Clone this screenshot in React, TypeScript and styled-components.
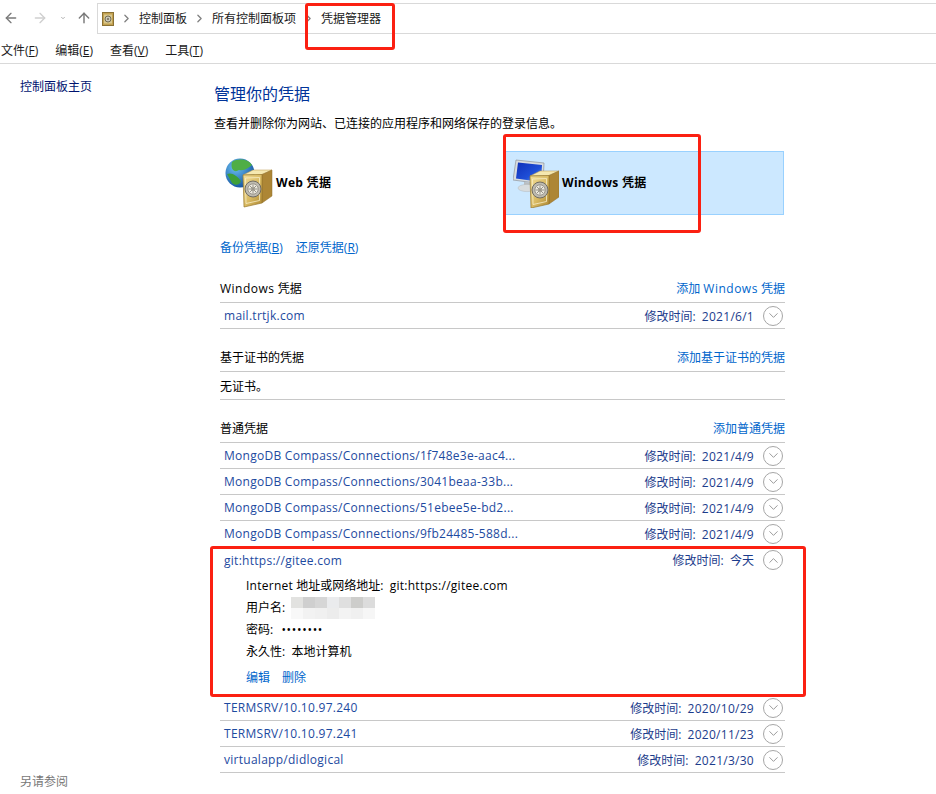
import { ArrowLeft, ArrowRight, ArrowUp, ChevronDown, ChevronRight, ChevronUp } from "lucide-react";
import styled, { createGlobalStyle } from "styled-components";

const GlobalStyle = createGlobalStyle`
    html, body {
        margin: 0;
        padding: 0;
        background: #fff;
    }
    * {
        box-sizing: border-box;
    }
`

const Main = styled.main`
    position: relative;
    width: 936px;
    height: 794px;
    overflow: hidden;
    background: #fff;
    color: #000;
    font-family: "Open Sans", "Noto Sans CJK SC", sans-serif;
    font-size: 12px;
`

const Latin = styled.span`
    letter-spacing: 0.27px;
`

const LatinWide = styled.span`
    letter-spacing: 0.5px;
`

const NavBar = styled.div`
    display: flex;
    align-items: flex-start;
    height: 34px;
    padding-top: 3px;
`

const NavButtons = styled.div`
    display: flex;
    align-items: center;
    width: 97px;
    height: 30px;
    padding-left: 2px;
`

const NavButton = styled.span<{ $width: number; $color: string }>`
    display: flex;
    flex-shrink: 0;
    justify-content: center;
    width: ${props => props.$width}px;
    color: ${props => props.$color};
`

const AddressBar = styled.div`
    display: flex;
    align-items: center;
    flex: 1;
    height: 31px;
    padding-left: 4px;
    border: 1px solid #d9d9d9;
    border-right: none;
`

const Crumb = styled.span`
    line-height: 28px;
    color: #1a1a1a;
`

const CrumbArrow = styled.span`
    display: flex;
    justify-content: center;
    width: 25px;
    color: #808080;
`

const MenuBar = styled.div`
    display: flex;
    gap: 17px;
    align-items: center;
    height: 30px;
    padding-left: 1px;
    border-bottom: 1px solid #d9d9d9;
    padding-top: 3px;
`

const MenuItem = styled.span`
    color: #1a1a1a;
    u {
        text-underline-offset: 1px;
    }
`

const Page = styled.div`
    display: flex;
    height: 730px;
`

const SideBar = styled.div`
    display: flex;
    flex-direction: column;
    justify-content: space-between;
    width: 214px;
    padding: 13px 0 2px 20px;
`

const SideLink = styled.span`
    line-height: 20px;
    color: #00136f;
`

const SideFooter = styled.span`
    line-height: 20px;
    color: #777;
`

const Content = styled.div`
    width: 571px;
    padding-top: 19px;
`

const Heading = styled.h1`
    margin: 0;
    font-size: 16px;
    font-weight: 400;
    line-height: 22px;
    color: #003399;
`

const Description = styled.p`
    margin: 9px 0 0;
    line-height: 20px;
`

const Tiles = styled.div`
    display: flex;
    height: 64px;
    margin-top: 17px;
`

const Tile = styled.div<{ $active?: boolean; $width: number }>`
    display: flex;
    align-items: center;
    gap: 3px;
    width: ${props => props.$width}px;
    padding-left: ${props => props.$active ? 9 : 10}px;
    background: ${props => props.$active ? "#cce8ff" : "transparent"};
    border: 1px solid ${props => props.$active ? "#99d1ff" : "transparent"};
`

const TileLabel = styled.span`
    margin-bottom: 2px;
    font-weight: 700;
    letter-spacing: 0.3px;
`

const BackupLinks = styled.div`
    display: flex;
    gap: 13px;
    margin-top: 23px;
    padding-left: 6px;
    line-height: 20px;
    color: #0066cc;
    u {
        text-underline-offset: 1px;
    }
`

const Section = styled.section<{ $gap: number }>`
    margin-top: ${props => props.$gap}px;
    padding-left: 6px;
`

const SectionHead = styled.div`
    display: flex;
    justify-content: space-between;
    height: 24px;
    line-height: 20px;
    border-bottom: 1px solid #c8c8c8;
`

const AddLink = styled.span`
    color: #0066cc;
`

const Row = styled.div`
    display: flex;
    align-items: center;
    height: 26px;
    padding: 0 2px 0 4px;
    border-bottom: 1px solid #c8c8c8;
`

const EmptyRow = styled(Row)`
    height: 28px;
    padding-left: 0;
`

const ExpandedRow = styled.div`
    height: 148px;
    border-bottom: 1px solid #c8c8c8;
`

const RowHead = styled(Row)`
    border-bottom: none;
`

const RowName = styled.span`
    flex: 1;
    letter-spacing: 0.27px;
    color: #1d4aa0;
`

const RowDate = styled.span`
    margin-right: 9px;
    color: #1c3c8c;
`

const Toggle = styled.span`
    display: flex;
    align-items: center;
    justify-content: center;
    width: 20px;
    height: 20px;
    color: #8c8c8c;
    border: 1px solid #a6a6a6;
    border-radius: 50%;
`

const Details = styled.div`
    padding: 2px 0 0 26px;
`

const DetailLine = styled.div`
    height: 22px;
    line-height: 22px;
`

const UserLine = styled(DetailLine)`
    display: flex;
    align-items: center;
`

const Mosaic = styled.div`
    display: grid;
    grid-template-columns: repeat(7, 12px);
    grid-auto-rows: 11px;
    margin-left: 6px;
`

const MosaicCell = styled.span<{ $color: string }>`
    background: ${props => props.$color};
`

const PasswordDots = styled.span`
    margin-left: 2px;
    letter-spacing: 0.7px;
`

const DetailActions = styled.div`
    display: flex;
    gap: 12px;
    margin-top: 4px;
    line-height: 22px;
    color: #0066cc;
`

const Annotation = styled.div<{ $x: number; $y: number; $w: number; $h: number }>`
    position: absolute;
    left: ${props => props.$x}px;
    top: ${props => props.$y}px;
    width: ${props => props.$w}px;
    height: ${props => props.$h}px;
    border: 3px solid #fb2012;
    border-radius: 3px;
`

const mosaicColors = [
    "#e2e2e0", "#cfcfcf", "#d6d6d6", "#eaebed", "#dfdfdf", "#cdcdcb", "#dcdcdc",
    "#f8f8f8", "#f2f2f2", "#f0f0f0", "#ececec", "#f3f3f3", "#f0f0f0", "#f6f6f6",
];

const mongoRows = [
    ["MongoDB Compass/Connections/1f748e3e-aac4...", "2021/4/9"],
    ["MongoDB Compass/Connections/3041beaa-33b...", "2021/4/9"],
    ["MongoDB Compass/Connections/51ebee5e-bd2...", "2021/4/9"],
    ["MongoDB Compass/Connections/9fb24485-588d...", "2021/4/9"],
];

const otherRows = [
    ["TERMSRV/10.10.97.240", "2020/10/29"],
    ["TERMSRV/10.10.97.241", "2020/11/23"],
    ["virtualapp/didlogical", "2021/3/30"],
];

// gold safe, the same drawing on both tiles
function VaultShape(props: { id: string }) {
    return (
        <g>
            <defs>
                <linearGradient id={props.id} x1="0" y1="0" x2="1" y2="1">
                    <stop offset="0" stopColor="#f1dd98" />
                    <stop offset="0.55" stopColor="#d9ba62" />
                    <stop offset="1" stopColor="#ae8833" />
                </linearGradient>
            </defs>
            <path d="M18 18 L28 13 L47 13 L37 17.5 Z" fill="#f5e8b0" stroke="#b8964a" strokeWidth="0.5" />
            <path d="M37 17.5 L47 13 L47 39 L37 46 Z" fill="#ad8635" stroke="#8f6f2c" strokeWidth="0.5" />
            <path d="M18 18 L37 17.5 L37 46 L19 50 Z" fill={`url(#${props.id})`} stroke="#987729" strokeWidth="0.7" />
            <path d="M20.5 21 L34.5 20.5 L34.5 43.5 L21 46.5 Z" fill="none" stroke="#f8eec6" strokeWidth="0.8" />
            <circle cx="28" cy="32" r="8" fill="#bdbab0" stroke="#6f6b62" strokeWidth="1" />
            <circle cx="28" cy="32" r="5.2" fill="#ece9df" stroke="#8b877d" strokeWidth="0.8" />
            <path d="M28 27.5 V36.5 M23.5 32 H32.5 M25 29 L31 35 M31 29 L25 35" stroke="#807c72" strokeWidth="0.8" />
            <circle cx="28" cy="32" r="1.8" fill="#9a968b" />
        </g>
    );
}

function WebVaultIcon() {
    return (
        <svg width="48" height="52" viewBox="0 0 48 52">
            <defs>
                <radialGradient id="globeFill" cx="0.35" cy="0.3" r="0.8">
                    <stop offset="0" stopColor="#6cc0f2" />
                    <stop offset="1" stopColor="#0b4a9a" />
                </radialGradient>
            </defs>
            <circle cx="15" cy="16" r="14.5" fill="url(#globeFill)" />
            <path d="M7 5 C13 1 23 2 27 8 C23 11 20 14 14 13 C10 16 5 13 7 5 Z" fill="#4fae45" />
            <path d="M2 17 C7 15 12 19 16 24 C15 28 10 29 7 26 Z" fill="#3f9f38" />
            <VaultShape id="vaultWeb" />
        </svg>
    );
}

function WindowsVaultIcon() {
    return (
        <svg width="46" height="50" viewBox="0 0 46 50">
            <defs>
                <linearGradient id="screenFill" x1="0" y1="0" x2="1" y2="1">
                    <stop offset="0" stopColor="#0f2fb8" />
                    <stop offset="0.6" stopColor="#1f4fd8" />
                    <stop offset="1" stopColor="#7fb0f0" />
                </linearGradient>
            </defs>
            <path d="M3 2 L31 5 L30 26 L0 22 Z" fill="#d8dcdf" stroke="#8f9499" strokeWidth="0.7" />
            <path d="M5 4.5 L29 7 L28 24 L3 20.5 Z" fill="url(#screenFill)" />
            <path d="M11 24 L20 25 L20 29 L11 28 Z" fill="#b9bdc0" />
            <ellipse cx="14" cy="30" rx="9" ry="3.6" fill="#d8dcde" stroke="#b4b8ba" strokeWidth="0.5" />
            <g transform="translate(-1 0)">
                <VaultShape id="vaultWin" />
            </g>
        </svg>
    );
}

function SmallVaultIcon() {
    return (
        <svg width="12" height="14" viewBox="0 0 12 14">
            <rect x="0.5" y="0.5" width="11" height="13" fill="#c2a04f" stroke="#8a7134" />
            <rect x="2" y="2.5" width="8" height="9" fill="#d8c88e" />
            <circle cx="6" cy="7" r="3" fill="#c9c6b8" stroke="#716a52" />
            <circle cx="6" cy="7" r="1" fill="#716a52" />
        </svg>
    );
}

function CrumbSeparator() {
    return <CrumbArrow><ChevronRight size={13} strokeWidth={2.4} /></CrumbArrow>;
}

function DataRow(props: { name: string; date: string }) {
    return (
        <Row>
            <RowName>{props.name}</RowName>
            <RowDate>修改时间:&nbsp; <Latin>{props.date}</Latin></RowDate>
            <Toggle><ChevronDown size={15} strokeWidth={1.4} /></Toggle>
        </Row>
    );
}

export default function App() {
    return (
        <Main>
            <GlobalStyle />
            <NavBar>
                <NavButtons>
                    <NavButton $width={18} $color="#7a7a7a"><ArrowLeft size={16} strokeWidth={2} /></NavButton>
                    <NavButton $width={40} $color="#cfcfcf"><ArrowRight size={16} strokeWidth={2} /></NavButton>
                    <NavButton $width={6} $color="#8a8a8a"><ChevronDown size={12} strokeWidth={2.6} /></NavButton>
                    <NavButton $width={36} $color="#7a7a7a"><ArrowUp size={16} strokeWidth={2.2} /></NavButton>
                </NavButtons>
                <AddressBar>
                    <SmallVaultIcon />
                    <CrumbSeparator />
                    <Crumb>控制面板</Crumb>
                    <CrumbSeparator />
                    <Crumb>所有控制面板项</Crumb>
                    <CrumbSeparator />
                    <Crumb>凭据管理器</Crumb>
                </AddressBar>
            </NavBar>
            <MenuBar>
                <MenuItem>文件(<u>F</u>)</MenuItem>
                <MenuItem>编辑(<u>E</u>)</MenuItem>
                <MenuItem>查看(<u>V</u>)</MenuItem>
                <MenuItem>工具(<u>T</u>)</MenuItem>
            </MenuBar>
            <Page>
                <SideBar>
                    <SideLink>控制面板主页</SideLink>
                    <SideFooter>另请参阅</SideFooter>
                </SideBar>
                <Content>
                    <Heading>管理你的凭据</Heading>
                    <Description>查看并删除你为网站、已连接的应用程序和网络保存的登录信息。</Description>
                    <Tiles>
                        <Tile $width={289}><WebVaultIcon /><TileLabel>Web 凭据</TileLabel></Tile>
                        <Tile $width={281} $active><WindowsVaultIcon /><TileLabel>Windows 凭据</TileLabel></Tile>
                    </Tiles>
                    <BackupLinks>
                        <span>备份凭据(<u>B</u>)</span>
                        <span>还原凭据(<u>R</u>)</span>
                    </BackupLinks>
                    <Section $gap={21}>
                        <SectionHead>
                            <span><LatinWide>Windows</LatinWide> 凭据</span>
                            <AddLink>添加 <LatinWide>Windows</LatinWide> 凭据</AddLink>
                        </SectionHead>
                        <DataRow name="mail.trtjk.com" date="2021/6/1" />
                    </Section>
                    <Section $gap={19}>
                        <SectionHead>
                            <span>基于证书的凭据</span>
                            <AddLink>添加基于证书的凭据</AddLink>
                        </SectionHead>
                        <EmptyRow>无证书。</EmptyRow>
                    </Section>
                    <Section $gap={19}>
                        <SectionHead>
                            <span>普通凭据</span>
                            <AddLink>添加普通凭据</AddLink>
                        </SectionHead>
                        {mongoRows.map(row => <DataRow key={row[0]} name={row[0]} date={row[1]} />)}
                        <ExpandedRow>
                            <RowHead>
                                <RowName>git:https://gitee.com</RowName>
                                <RowDate>修改时间:&nbsp; 今天</RowDate>
                                <Toggle><ChevronUp size={15} strokeWidth={1.4} /></Toggle>
                            </RowHead>
                            <Details>
                                <DetailLine><Latin>Internet</Latin> 地址或网络地址:&nbsp; <Latin>git:https://gitee.com</Latin></DetailLine>
                                <UserLine>
                                    用户名:
                                    <Mosaic>
                                        {mosaicColors.map((color, index) => <MosaicCell key={index} $color={color} />)}
                                    </Mosaic>
                                </UserLine>
                                <DetailLine>密码:&nbsp; <PasswordDots>••••••••</PasswordDots></DetailLine>
                                <DetailLine>永久性:&nbsp; 本地计算机</DetailLine>
                                <DetailActions>
                                    <span>编辑</span>
                                    <span>删除</span>
                                </DetailActions>
                            </Details>
                        </ExpandedRow>
                        {otherRows.map(row => <DataRow key={row[0]} name={row[0]} date={row[1]} />)}
                    </Section>
                </Content>
            </Page>
            <Annotation $x={305} $y={3} $w={90} $h={47} />
            <Annotation $x={503} $y={134} $w={198} $h={99} />
            <Annotation $x={210} $y={546} $w={596} $h={151} />
        </Main>
    );
}
